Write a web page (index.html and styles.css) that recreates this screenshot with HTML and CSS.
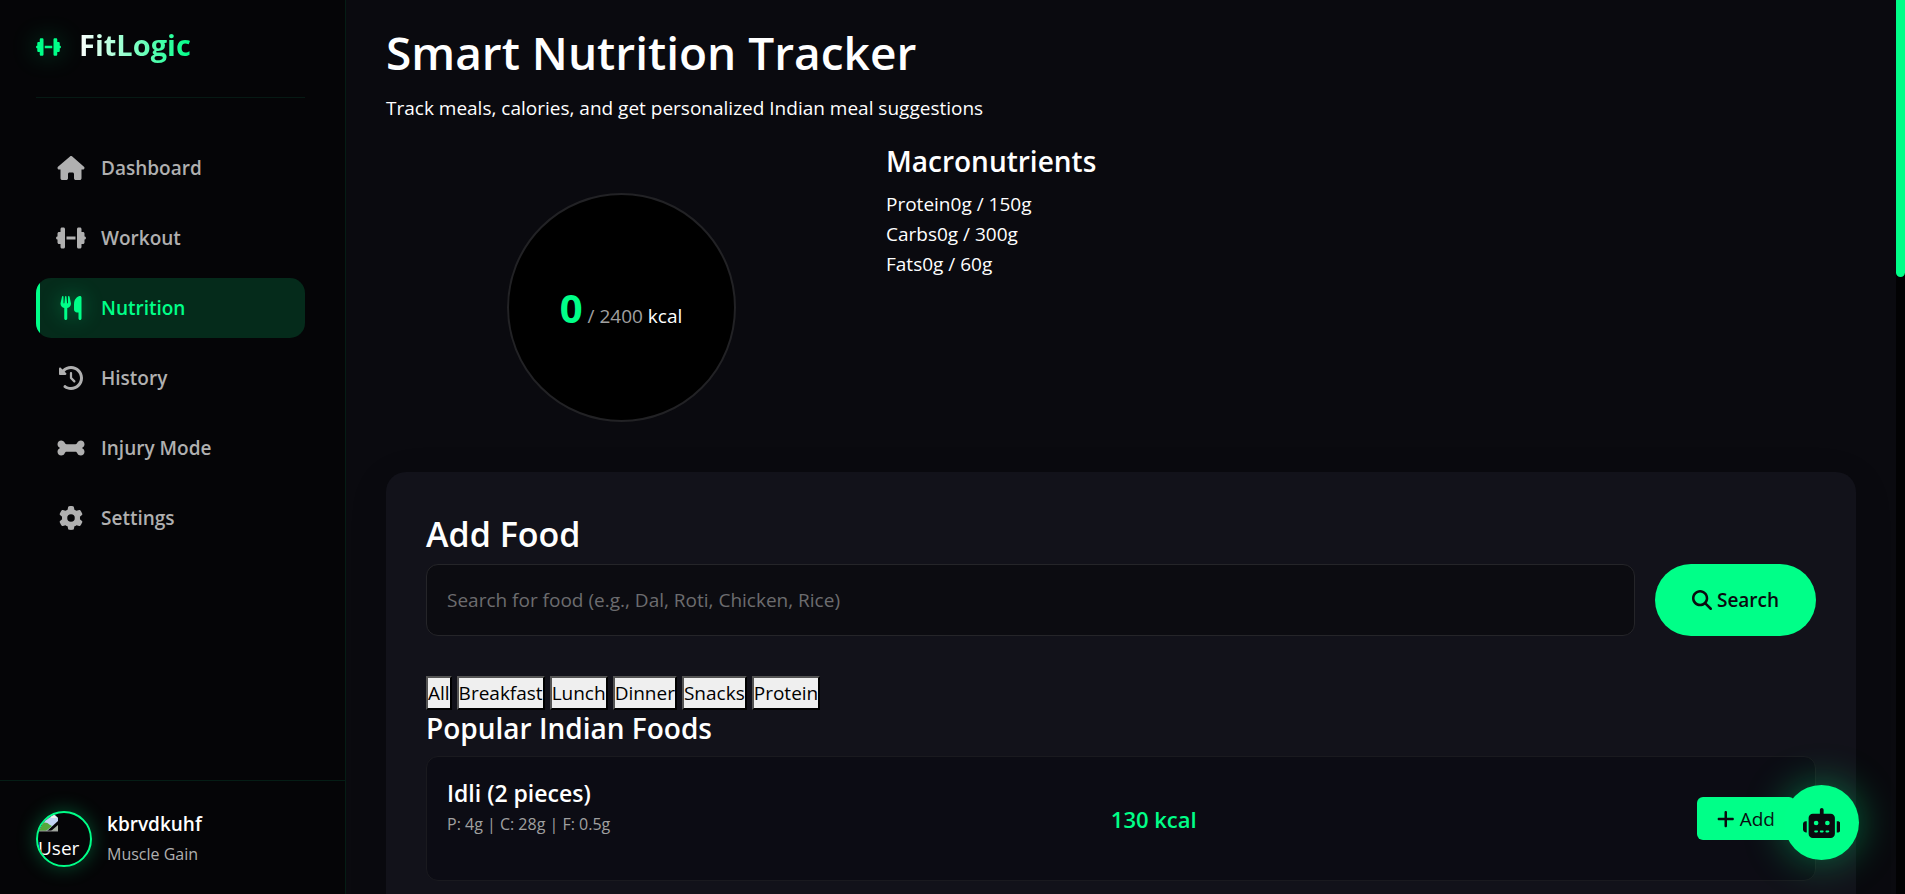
FILE: index.html
```html
<!DOCTYPE html>
<html lang="en">
<head>
  <meta charset="UTF-8">
  <meta name="viewport" content="width=device-width, initial-scale=1.0">
  <title>FitLogic - Nutrition</title>
  <link rel="stylesheet" href="styles.css">
</head>
<body>
<div class="app">
  <aside class="sidebar">
    <div class="logo">
      <svg class="logo-icon" viewBox="0 0 640 512"><path d="M96 64c0-17.7 14.3-32 32-32l32 0c17.7 0 32 14.3 32 32l0 160 0 64 0 160c0 17.7-14.3 32-32 32l-32 0c-17.7 0-32-14.3-32-32l0-64-32 0c-17.7 0-32-14.3-32-32l0-64c-17.7 0-32-14.3-32-32s14.3-32 32-32l0-64c0-17.7 14.3-32 32-32l32 0 0-64zm448 0l0 64 32 0c17.7 0 32 14.3 32 32l0 64c17.7 0 32 14.3 32 32s-14.3 32-32 32l0 64c0 17.7-14.3 32-32 32l-32 0 0 64c0 17.7-14.3 32-32 32l-32 0c-17.7 0-32-14.3-32-32l0-160 0-64 0-160c0-17.7 14.3-32 32-32l32 0c17.7 0 32 14.3 32 32zM416 224l0 64-192 0 0-64 192 0z"/></svg>
      <span class="logo-text">FitLogic</span>
    </div>

    <nav class="nav">
      <a href="#" class="nav-item">
        <svg class="nav-icon" viewBox="0 0 576 512"><path d="M575.8 255.5c0 18-15 32.1-32 32.1l-32 0 .7 160.2c0 2.7-.2 5.4-.5 8.1l0 16.2c0 22.1-17.9 40-40 40l-16 0c-1.1 0-2.2 0-3.3-.1c-1.4 .1-2.8 .1-4.2 .1L416 512l-24 0c-22.1 0-40-17.9-40-40l0-24 0-64c0-17.7-14.3-32-32-32l-64 0c-17.7 0-32 14.3-32 32l0 64 0 24c0 22.1-17.9 40-40 40l-24 0-31.9 0c-1.5 0-3-.1-4.5-.2c-1.2 .1-2.4 .2-3.6 .2l-16 0c-22.1 0-40-17.9-40-40l0-112c0-.9 0-1.9 .1-2.8l0-69.7-32 0c-18 0-32-14-32-32.1c0-9 3-17 10-24L266.4 8c7-7 15-8 22-8s15 2 21 7L564.8 231.5c8 7 12 15 11 24z"/></svg>
        <span>Dashboard</span>
      </a>
      <a href="#" class="nav-item">
        <svg class="nav-icon" viewBox="0 0 640 512"><path d="M96 64c0-17.7 14.3-32 32-32l32 0c17.7 0 32 14.3 32 32l0 160 0 64 0 160c0 17.7-14.3 32-32 32l-32 0c-17.7 0-32-14.3-32-32l0-64-32 0c-17.7 0-32-14.3-32-32l0-64c-17.7 0-32-14.3-32-32s14.3-32 32-32l0-64c0-17.7 14.3-32 32-32l32 0 0-64zm448 0l0 64 32 0c17.7 0 32 14.3 32 32l0 64c17.7 0 32 14.3 32 32s-14.3 32-32 32l0 64c0 17.7-14.3 32-32 32l-32 0 0 64c0 17.7-14.3 32-32 32l-32 0c-17.7 0-32-14.3-32-32l0-160 0-64 0-160c0-17.7 14.3-32 32-32l32 0c17.7 0 32 14.3 32 32zM416 224l0 64-192 0 0-64 192 0z"/></svg>
        <span>Workout</span>
      </a>
      <a href="#" class="nav-item active">
        <svg class="nav-icon" viewBox="0 0 448 512"><path d="M416 0C400 0 288 32 288 176l0 112c0 35.3 28.7 64 64 64l32 0 0 128c0 17.7 14.3 32 32 32s32-14.3 32-32l0-128 0-112 0-208c0-17.7-14.3-32-32-32zM64 16C64 7.8 57.9 1 49.7 .1S34.2 4.6 32.4 12.5L2.1 148.8C.7 155.1 0 161.5 0 167.9c0 45.9 35.1 83.6 80 87.7L80 480c0 17.7 14.3 32 32 32s32-14.3 32-32l0-224.4c44.9-4.1 80-41.8 80-87.7c0-6.4-.7-12.8-2.1-19.1L191.6 12.5c-1.8-8-9.3-13.3-17.4-12.4S160 7.8 160 16l0 134.2c0 5.4-4.4 9.8-9.8 9.8c-5.1 0-9.3-3.9-9.8-9L127.9 14.6C127.2 6.3 120.3 0 112 0s-15.2 6.3-15.9 14.6L83.7 151c-.5 5.1-4.7 9-9.8 9c-5.4 0-9.8-4.4-9.8-9.8L64 16z"/></svg>
        <span>Nutrition</span>
      </a>
      <a href="#" class="nav-item">
        <svg class="nav-icon" viewBox="0 0 512 512"><path d="M75 75L41 41C25.9 25.9 0 36.6 0 57.9L0 168c0 13.3 10.7 24 24 24l110.1 0c21.4 0 32.1-25.9 17-41l-30.8-30.8C155 85.5 203 64 256 64c106 0 192 86 192 192s-86 192-192 192c-40.8 0-78.6-12.7-109.7-34.4c-14.5-10.1-34.4-6.6-44.6 7.9s-6.6 34.4 7.9 44.6C151.2 495 201.7 512 256 512c141.4 0 256-114.6 256-256S397.4 0 256 0C185.3 0 121.3 28.7 75 75zm181 53c-13.3 0-24 10.7-24 24l0 104c0 6.4 2.5 12.5 7 17l72 72c9.4 9.4 24.6 9.4 33.9 0s9.4-24.6 0-33.9l-65-65 0-94.1c0-13.3-10.7-24-24-24z"/></svg>
        <span>History</span>
      </a>
      <a href="#" class="nav-item">
        <svg class="nav-icon" viewBox="0 0 576 512"><path d="M153.7 144.8c6.9 16.3 20.6 31.2 38.3 31.2l192 0c17.7 0 31.4-14.9 38.3-31.2C434.4 116.1 462.9 96 496 96c44.2 0 80 35.8 80 80c0 30.4-17 56.9-42 70.4c-3.6 1.9-6 5.5-6 9.6s2.4 7.7 6 9.6c25 13.5 42 40 42 70.4c0 44.2-35.8 80-80 80c-33.1 0-61.6-20.1-73.7-48.8C415.4 350.9 401.7 336 384 336l-192 0c-17.7 0-31.4 14.9-38.3 31.2C141.6 395.9 113.1 416 80 416c-44.2 0-80-35.8-80-80c0-30.4 17-56.9 42-70.4c3.6-1.9 6-5.5 6-9.6s-2.4-7.7-6-9.6C17 232.9 0 206.4 0 176c0-44.2 35.8-80 80-80c33.1 0 61.6 20.1 73.7 48.8z"/></svg>
        <span>Injury Mode</span>
      </a>
      <a href="#" class="nav-item">
        <svg class="nav-icon" viewBox="0 0 512 512"><path d="M495.9 166.6c3.2 8.7 .5 18.4-6.4 24.6l-43.3 39.4c1.1 8.3 1.7 16.8 1.7 25.4s-.6 17.1-1.7 25.4l43.3 39.4c6.9 6.2 9.6 15.9 6.4 24.6c-4.4 11.9-9.7 23.3-15.8 34.3l-4.7 8.1c-6.6 11-14 21.4-22.1 31.2c-5.9 7.2-15.7 9.6-24.5 6.8l-55.7-17.7c-13.4 10.3-28.2 18.9-44 25.4l-12.5 57.1c-2 9.1-9 16.3-18.2 17.8c-13.8 2.3-28 3.5-42.5 3.5s-28.7-1.2-42.5-3.5c-9.2-1.5-16.2-8.7-18.2-17.8l-12.5-57.1c-15.8-6.5-30.6-15.1-44-25.4L83.1 425.9c-8.8 2.8-18.6 .3-24.5-6.8c-8.1-9.8-15.5-20.2-22.1-31.2l-4.7-8.1c-6.1-11-11.4-22.4-15.8-34.3c-3.2-8.7-.5-18.4 6.4-24.6l43.3-39.4C64.6 273.1 64 264.6 64 256s.6-17.1 1.7-25.4L22.4 191.2c-6.9-6.2-9.6-15.9-6.4-24.6c4.4-11.9 9.7-23.3 15.8-34.3l4.7-8.1c6.6-11 14-21.4 22.1-31.2c5.9-7.2 15.7-9.6 24.5-6.8l55.7 17.7c13.4-10.3 28.2-18.9 44-25.4l12.5-57.1c2-9.1 9-16.3 18.2-17.8C227.3 1.2 241.5 0 256 0s28.7 1.2 42.5 3.5c9.2 1.5 16.2 8.7 18.2 17.8l12.5 57.1c15.8 6.5 30.6 15.1 44 25.4l55.7-17.7c8.8-2.8 18.6-.3 24.5 6.8c8.1 9.8 15.5 20.2 22.1 31.2l4.7 8.1c6.1 11 11.4 22.4 15.8 34.3zM256 336a80 80 0 1 0 0-160 80 80 0 1 0 0 160z"/></svg>
        <span>Settings</span>
      </a>
    </nav>

    <div class="user">
      <div class="avatar">
        <svg class="avatar-icon" viewBox="0 0 20 20">
          <path d="M0 0h15l5 5v3L9 18H0z" fill="#c3d5f5"/>
          <path d="M13 0v5h7z" fill="#eee"/>
          <path d="M0 14c3-5 8-6 12-2l2 1-6 5H0z" fill="#55a83a"/>
          <path d="M20 12v6h-7z" fill="#a9b4a5"/>
          <path d="M0 18h20" stroke="#999"/>
        </svg>
        <span>User</span>
      </div>
      <div class="user-info">
        <div class="user-name">kbrvdkuhf</div>
        <div class="user-goal">Muscle Gain</div>
      </div>
    </div>
  </aside>

  <main class="main">
    <header class="page-header">
      <h1>Smart Nutrition Tracker</h1>
      <p>Track meals, calories, and get personalized Indian meal suggestions</p>
    </header>

    <section class="summary">
      <div class="calories">
        <div class="calorie-circle">
          <div><span class="consumed">0</span> <span class="goal">/ 2400</span> kcal</div>
        </div>
      </div>
      <div class="macros">
        <h3>Macronutrients</h3>
        <div><span>Protein</span><span>0g / 150g</span></div>
        <div><span>Carbs</span><span>0g / 300g</span></div>
        <div><span>Fats</span><span>0g / 60g</span></div>
      </div>
    </section>

    <section class="card">
      <h2>Add Food</h2>
      <form class="search">
        <input type="text" class="search-input" aria-label="Search for food" placeholder="Search for food (e.g., Dal, Roti, Chicken, Rice)">
        <button type="button" class="search-btn">
          <svg class="btn-icon" viewBox="0 0 512 512"><path d="M416 208c0 45.9-14.9 88.3-40 122.7L502.6 457.4c12.5 12.5 12.5 32.8 0 45.3s-32.8 12.5-45.3 0L330.7 376c-34.4 25.2-76.8 40-122.7 40C93.1 416 0 322.9 0 208S93.1 0 208 0S416 93.1 416 208zM208 352a144 144 0 1 0 0-288 144 144 0 1 0 0 288z"/></svg>
          Search
        </button>
      </form>

      <div class="filters">
        <button>All</button>
        <button>Breakfast</button>
        <button>Lunch</button>
        <button>Dinner</button>
        <button>Snacks</button>
        <button>Protein</button>
      </div>

      <h3>Popular Indian Foods</h3>
      <div class="food-item">
        <div class="food-info">
          <h4>Idli (2 pieces)</h4>
          <p>P: 4g | C: 28g | F: 0.5g</p>
        </div>
        <div class="food-calories">130 kcal</div>
        <button class="add-btn">
          <svg class="btn-icon" viewBox="0 0 448 512"><path d="M256 80c0-17.7-14.3-32-32-32s-32 14.3-32 32l0 144L48 224c-17.7 0-32 14.3-32 32s14.3 32 32 32l144 0 0 144c0 17.7 14.3 32 32 32s32-14.3 32-32l0-144 144 0c17.7 0 32-14.3 32-32s-14.3-32-32-32l-144 0 0-144z"/></svg>
          Add
        </button>
      </div>
    </section>
  </main>
</div>

<button class="chat-btn" aria-label="Chat">
  <svg viewBox="0 0 640 512"><path d="M320 0c17.7 0 32 14.3 32 32l0 64 120 0c39.8 0 72 32.2 72 72l0 272c0 39.8-32.2 72-72 72l-304 0c-39.8 0-72-32.2-72-72l0-272c0-39.8 32.2-72 72-72l120 0 0-64c0-17.7 14.3-32 32-32zM208 384c-8.8 0-16 7.2-16 16s7.2 16 16 16l32 0c8.8 0 16-7.2 16-16s-7.2-16-16-16l-32 0zm96 0c-8.8 0-16 7.2-16 16s7.2 16 16 16l32 0c8.8 0 16-7.2 16-16s-7.2-16-16-16l-32 0zm96 0c-8.8 0-16 7.2-16 16s7.2 16 16 16l32 0c8.8 0 16-7.2 16-16s-7.2-16-16-16l-32 0zM264 256a40 40 0 1 0 -80 0 40 40 0 1 0 80 0zm152 40a40 40 0 1 0 0-80 40 40 0 1 0 0 80zM48 224l16 0 0 192-16 0c-26.5 0-48-21.5-48-48l0-96c0-26.5 21.5-48 48-48zm544 0c26.5 0 48 21.5 48 48l0 96c0 26.5-21.5 48-48 48l-16 0 0-192 16 0z"/></svg>
</button>
<div class="scrollbar"><div class="scrollbar-thumb"></div></div>
</body>
</html>
```
FILE: styles.css
```css
* {
  margin: 0;
  padding: 0;
  box-sizing: border-box;
}

body {
  font-family: "Open Sans", "Noto Sans", sans-serif;
  font-size: 19px;
  line-height: 30px;
  background: #0a0a0f;
  color: #fff;
  overflow: hidden;
}

svg {
  fill: currentColor;
}

h1, h2, h3, h4 {
  font-weight: 600;
}

.app {
  display: flex;
  height: 100vh;
  padding-right: 9px;
}

/* sidebar */
.sidebar {
  display: flex;
  flex-direction: column;
  flex: 0 0 346px;
  background: #050507;
  border-right: 1px solid #051d15;
}

.logo {
  display: flex;
  align-items: center;
  gap: 18px;
  margin: 0 40px 0 36px;
  height: 98px;
  padding-bottom: 4px;
  border-bottom: 1px solid #061a14;
}

.logo-icon {
  height: 20px;
  color: #00ff88;
  filter: drop-shadow(0 0 12px rgba(0, 255, 136, 0.4));
}

.logo-text {
  font-size: 29px;
  font-weight: 700;
  line-height: 40px;
  padding-bottom: 4px;
  background: linear-gradient(90deg, #fff, #00ff88);
  -webkit-background-clip: text;
  background-clip: text;
  color: transparent;
}

.nav {
  display: flex;
  flex-direction: column;
  gap: 10px;
  padding: 40px 40px 0 36px;
  flex: 1;
}

.nav-item {
  display: flex;
  align-items: center;
  gap: 15px;
  height: 60px;
  padding-left: 20px;
  border-radius: 15px;
  color: #b0b0b0;
  font-weight: 600;
  text-decoration: none;
}

.nav-item.active {
  position: relative;
  overflow: hidden;
  background: #052b1b;
  color: #00ff88;
}

.nav-item.active::before {
  content: "";
  position: absolute;
  left: 0;
  top: 0;
  bottom: 0;
  width: 4px;
  background: #00ff88;
}

.nav-icon {
  width: 30px;
  height: 24px;
}

.nav-item.active .nav-icon {
  filter: drop-shadow(0 0 10px rgba(0, 255, 136, 0.4));
}

.user {
  display: flex;
  align-items: center;
  gap: 15px;
  height: 114px;
  padding: 2px 0 0 36px;
  border-top: 1px solid #051d15;
}

.avatar {
  width: 56px;
  height: 56px;
  border: 2px solid #00ff88;
  border-radius: 50%;
  overflow: hidden;
  box-shadow: 0 0 20px rgba(0, 255, 136, 0.3);
}

.avatar-icon {
  display: block;
  width: 20px;
  height: 20px;
}

.user-name {
  font-weight: 600;
}

.user-goal {
  font-size: 16px;
  color: #b0b0b0;
}

/* main */
.main {
  flex: 1;
  min-width: 0;
  padding: 20px 40px 0;
  overflow: hidden;
}

.page-header {
  margin-bottom: 20px;
}

h1 {
  font-size: 46px;
  line-height: 65px;
  margin-bottom: 8px;
}

.summary {
  display: grid;
  grid-template-columns: repeat(3, 1fr);
  gap: 30px;
}

.calories {
  display: flex;
  justify-content: center;
  padding: 50px 0;
}

.calorie-circle {
  display: flex;
  align-items: center;
  justify-content: center;
  width: 229px;
  height: 229px;
  padding-top: 8px;
  border: 2px solid #222225;
  border-radius: 50%;
  background: #000;
}

.consumed {
  font-size: 40px;
  font-weight: 700;
  color: #00ff88;
}

.goal {
  color: #a0a0a0;
}

h3 {
  font-size: 28px;
  line-height: 36px;
}

.macros h3 {
  margin-bottom: 10px;
}

.card {
  padding: 40px;
  border-radius: 20px;
  background: #12121a;
  box-shadow: 0 10px 40px rgba(0, 0, 0, 0.1);
}

h2 {
  font-size: 34px;
  line-height: 44px;
  margin-bottom: 8px;
}

.search {
  display: flex;
  gap: 20px;
  margin-bottom: 40px;
}

.search-input {
  flex: 1;
  height: 72px;
  padding: 0 20px;
  border: 1px solid #252529;
  border-radius: 12px;
  background: #0c0c11;
  color: #fff;
  font: inherit;
}

.search-input::placeholder {
  color: #6c6c6f;
}

.search-btn {
  display: flex;
  align-items: center;
  justify-content: center;
  gap: 5px;
  width: 161px;
  border: none;
  border-radius: 36px;
  background: #00ff88;
  color: #0a0a0f;
  font: inherit;
  font-weight: 600;
}

.btn-icon {
  height: 20px;
}

.filters {
  display: flex;
  gap: 5px;
}

.filters button {
  border: 2px outset #000;
  background: #efefef;
  color: #000;
  font: inherit;
}

.card h3 {
  margin-bottom: 10px;
}

.food-item {
  display: flex;
  align-items: center;
  justify-content: space-between;
  height: 125px;
  padding: 20px;
  margin-bottom: 20px;
  border: 1px solid #1a1a1f;
  border-radius: 12px;
  background: #0c0c14;
}

.food-info {
  align-self: flex-start;
}

.food-info h4 {
  font-size: 23px;
  line-height: 32px;
}

.food-info p {
  font-size: 16px;
  color: #a0a0a0;
}

.food-calories {
  font-size: 22px;
  font-weight: 600;
  color: #00ff88;
}

.add-btn {
  display: flex;
  align-items: center;
  gap: 5px;
  height: 43px;
  padding: 0 20px;
  border: none;
  border-radius: 6px;
  background: #00ff88;
  color: #0a0a0f;
  font: inherit;
}

/* floating chat button */
.chat-btn {
  position: fixed;
  right: 46px;
  bottom: 34px;
  display: flex;
  align-items: center;
  justify-content: center;
  width: 75px;
  height: 75px;
  border: none;
  border-radius: 50%;
  background: #00ff88;
  color: #0a0a0f;
  box-shadow: 0 0 40px rgba(0, 255, 136, 0.4);
}

.chat-btn svg {
  height: 30px;
}

.scrollbar {
  position: fixed;
  top: 0;
  right: 0;
  bottom: 0;
  width: 9px;
  background: #020203;
}

.scrollbar-thumb {
  height: 31%;
  border-radius: 0 0 5px 5px;
  background: #00ff88;
}
```
